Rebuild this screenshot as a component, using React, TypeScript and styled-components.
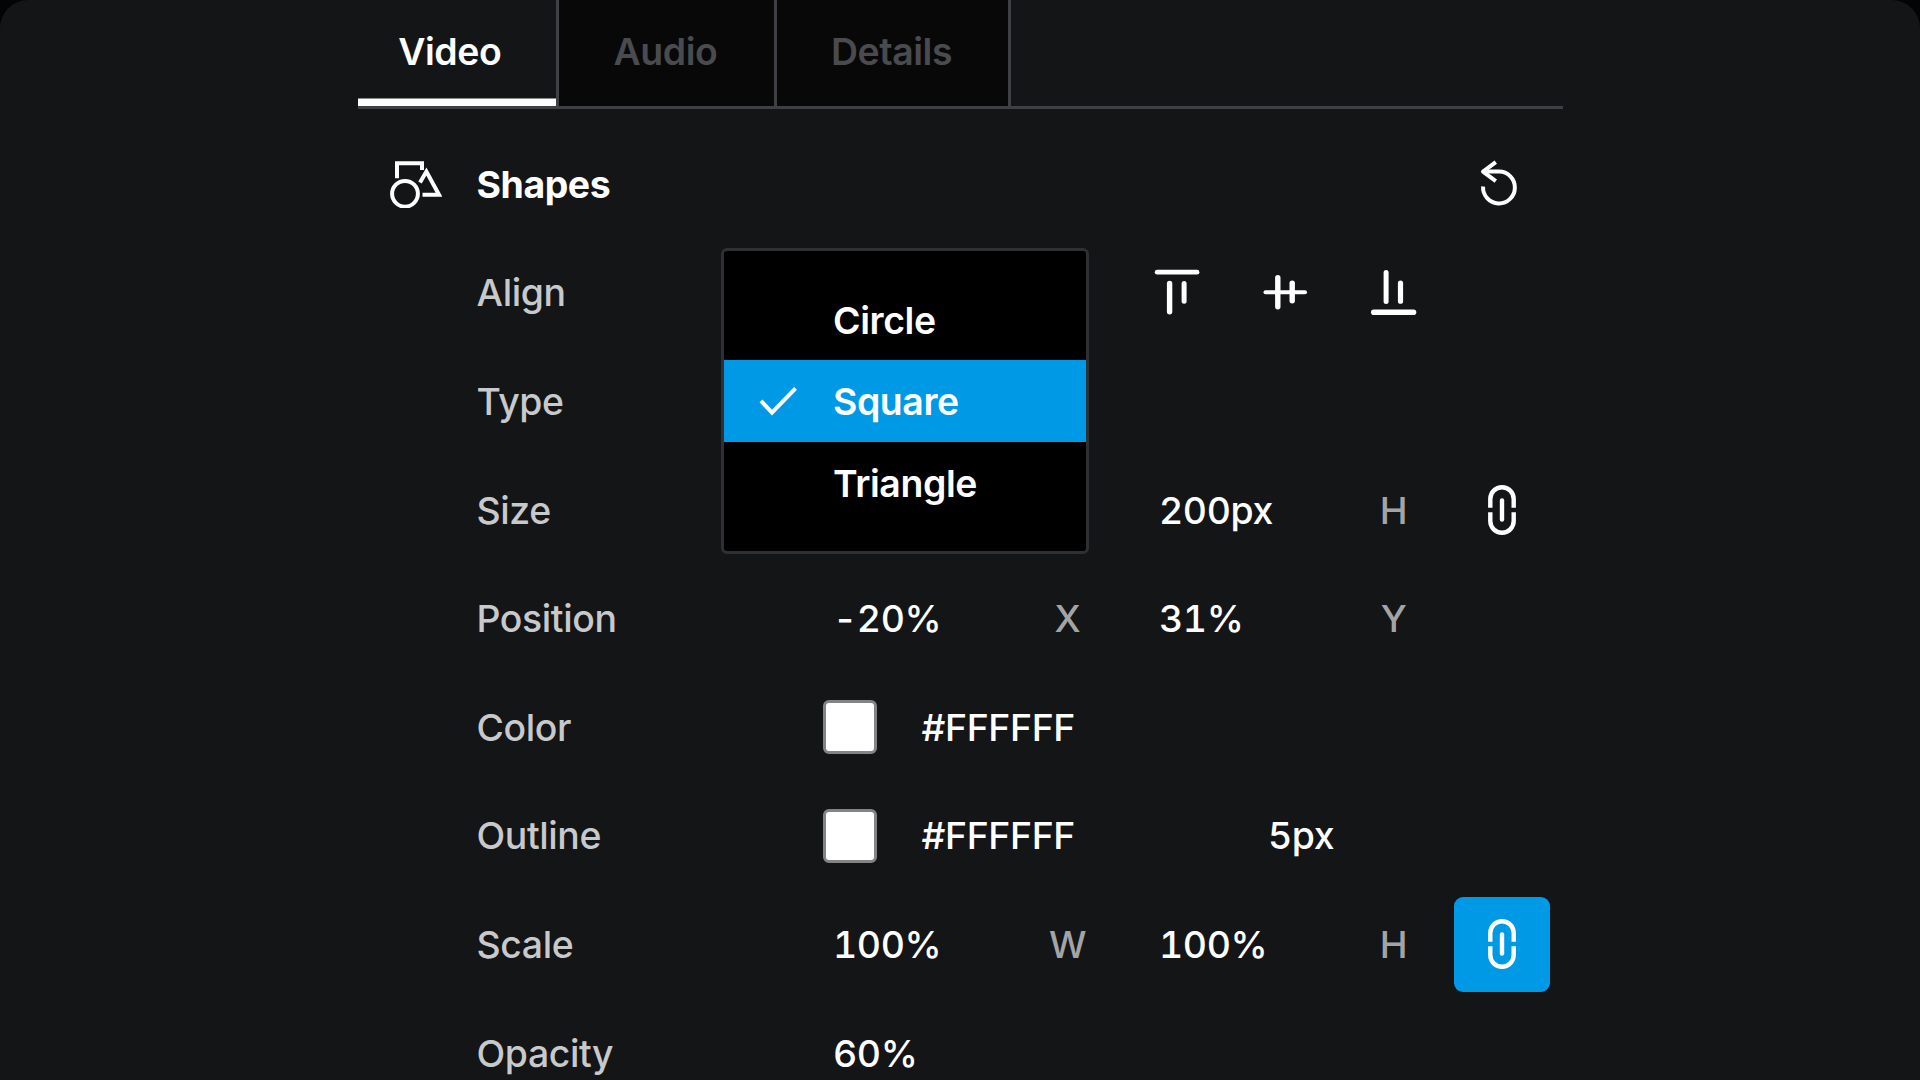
import React from 'react';
import styled, { createGlobalStyle } from 'styled-components';

const color = {
  panel: '#141517',
  tab: '#080808',
  line: '#3f4043',
  accent: '#0099e6',
  label: '#c8c9cb',
  unit: '#a4a4a7',
  muted: '#4a4b4e',
};

const GlobalStyle = createGlobalStyle`
  * { box-sizing: border-box; }
  body {
    margin: 0;
    background: #040404;
    overflow: hidden;
  }
`;

const Screen = styled.div`
  height: 1080px;
  display: flex;
  justify-content: center;
  overflow: hidden;
  border-radius: 28px 28px 0 0;
  background: ${color.panel};
  color: #fff;
  font-family: Inter, 'Liberation Sans', sans-serif;
  font-size: 37.4px;
  font-weight: 500;
  letter-spacing: -0.38px;
  line-height: 46px;
`;

const Inspector = styled.main`
  width: 1205px;
  flex: none;
`;

const Tabs = styled.nav`
  display: flex;
  height: 109px;
  border-bottom: 3px solid ${color.line};
  margin-bottom: 21px;
`;

const Tab = styled.button<{ $width: number; $active?: boolean }>`
  width: ${(p) => p.$width}px;
  height: 106px;
  padding: 0 ${(p) => (p.$active ? 14 : 2)}px 2px 0;
  border: 0;
  border-right: 3px solid ${color.line};
  background: ${(p) => (p.$active ? color.panel : color.tab)};
  box-shadow: ${(p) => (p.$active ? 'inset 0 -7.5px 0 #fff' : 'none')};
  color: ${(p) => (p.$active ? '#fff' : color.muted)};
  font: inherit;
  font-weight: 600;
  letter-spacing: -0.43px;
`;

const Row = styled.section`
  position: relative;
  display: grid;
  grid-template-columns: 120px 345px 218px 54px 65px 207px 54px 34px 96px;
  align-items: center;
  height: 108.6px;
`;

const Glyph = styled.div`
  display: flex;
  padding: 0 0 4px 28.5px;
`;

const Label = styled.label`
  grid-column: 2;
  margin-left: -1px;
  padding-top: 1px;
  color: ${color.label};
`;

const Title = styled.h2`
  margin: 0 0 0 -1px;
  padding-top: 1px;
  font-size: 37.4px;
  font-weight: 700;
  letter-spacing: -0.43px;
  line-height: 46px;
`;

const Value = styled.span<{ $col: 'a' | 'b' }>`
  grid-column: ${(p) => (p.$col === 'a' ? 3 : 6)};
  grid-row: 1;
  padding-top: 1px;
  padding-left: ${(p) => (p.$col === 'a' ? 10.5 : 0)}px;
  margin-left: ${(p) => (p.$col === 'a' ? 0 : -0.5)}px;
  font-feature-settings: 'tnum';
  white-space: nowrap;
`;

const Unit = styled.span<{ $col: 'a' | 'b' }>`
  grid-column: ${(p) => (p.$col === 'a' ? 4 : 7)};
  grid-row: 1;
  padding-top: 1px;
  color: ${color.unit};
  text-align: center;
`;

const ColorField = styled.div`
  grid-column: 3 / 6;
  grid-row: 1;
  display: flex;
  align-items: center;
  gap: 44.5px;
  padding-left: 0.5px;

  span { padding-top: 1px; }
`;

const Swatch = styled.i`
  width: 54px;
  height: 54px;
  border: 3px solid #848487;
  border-radius: 6px;
  background: #fff;
`;

const StrokeWidth = styled.span`
  grid-column: 6 / 8;
  padding: 1px 0 0 108.5px;
  font-feature-settings: 'tnum';
`;

const AlignGroup = styled.div`
  grid-column: 6 / 9;
  display: flex;
  gap: 60px;
  margin: 0 0 1px -7px;
`;

const Action = styled.button<{ $active?: boolean; $nudge?: boolean }>`
  grid-column: 9;
  grid-row: 1;
  display: flex;
  align-items: center;
  justify-content: center;
  width: 95.5px;
  height: 95px;
  margin-left: -0.5px;
  padding: ${(p) => (p.$nudge ? '0 6px 3px 0' : '0')};
  border: 0;
  border-radius: 9px;
  color: #fff;
  background: ${(p) => (p.$active ? color.accent : 'transparent')};
`;

const Menu = styled.ul`
  position: absolute;
  z-index: 1;
  top: -99px;
  left: 363.5px;
  width: 368px;
  height: 306px;
  margin: 0;
  padding: 27.6px 0;
  border: 3px solid #2f3033;
  border-radius: 6px;
  background: #000;
  list-style: none;
`;

const Option = styled.li<{ $selected?: boolean }>`
  display: grid;
  grid-template-columns: 35px 74px 1fr;
  align-items: center;
  height: 81.6px;
  background: ${(p) => (p.$selected ? color.accent : 'transparent')};
  font-weight: 600;
  letter-spacing: -0.4px;

  span {
    grid-column: 3;
    padding-top: 2px;
  }
`;

const Icon = styled.svg`
  display: block;
  flex: none;
  fill: none;
  stroke: currentColor;
  stroke-width: 4;
`;

const LinkShape = styled(Icon)`
  stroke-width: 4.4;
`;

const ShapesIcon = () => (
  <Icon width="56" height="52" viewBox="0 0 56 52">
    <path d="M11 22.3V7.2H36V14" />
    <circle cx="19" cy="37.8" r="12.9" />
    <path d="M34 26.5L40.4 15.6L53 38.7H36.5" />
  </Icon>
);

const ResetIcon = () => (
  <Icon width="44" height="52" viewBox="0 0 44 52" strokeLinejoin="round">
    <path d="M18.8 5.1L6 14.6L18.8 24.2" />
    <path d="M6 14.6H22A15.9 15.9 0 1 1 6.1 29.5" />
  </Icon>
);

const LinkIcon = () => (
  <LinkShape width="32" height="54" viewBox="0 0 32 54">
    <path d="M4.3 24.8V15.9A11.7 11.7 0 0 1 27.7 15.9V24.8" />
    <path d="M4.3 29.2V38.1A11.7 11.7 0 0 0 27.7 38.1V29.2" />
    <path d="M16 17.4V36.6" strokeLinecap="round" />
  </LinkShape>
);

const AlignTopIcon = () => (
  <Icon width="48" height="48" viewBox="0 0 48 48" strokeLinecap="round">
    <path d="M4.2 4.2H44" style={{ strokeWidth: 4.8 }} />
    <path d="M16.6 15.5V43.8" style={{ strokeWidth: 5.4 }} />
    <path d="M31.1 15.5V33.2" style={{ strokeWidth: 5 }} />
  </Icon>
);

const AlignMiddleIcon = () => (
  <Icon width="48" height="48" viewBox="0 0 48 48" strokeLinecap="round">
    <path d="M4.5 24.2H44" />
    <path d="M16.8 9.7V38.7" style={{ strokeWidth: 5.4 }} />
    <path d="M31.2 15.2V32.8" style={{ strokeWidth: 5.4 }} />
  </Icon>
);

const AlignBottomIcon = () => (
  <Icon width="48" height="48" viewBox="0 0 48 48" strokeLinecap="round">
    <path d="M17.1 4.4V33.5" style={{ strokeWidth: 5 }} />
    <path d="M31.5 15.2V33.2" style={{ strokeWidth: 5.2 }} />
    <path d="M4.8 44.2H44.5" style={{ strokeWidth: 5.6 }} />
  </Icon>
);

const CheckIcon = () => (
  <Icon width="40" height="34" viewBox="0 0 40 34">
    <path d="M2 16.9L13 28.7L36.5 4.4" />
  </Icon>
);

const CheckSlot = styled.div`
  grid-column: 2;
  display: flex;
`;

export default function App() {
  return (
    <>
      <GlobalStyle />
      <Screen>
        <Inspector>
          <Tabs>
            <Tab $width={201.5} $active>Video</Tab>
            <Tab $width={218}>Audio</Tab>
            <Tab $width={234}>Details</Tab>
          </Tabs>
          <Row>
            <Glyph><ShapesIcon /></Glyph>
            <Title>Shapes</Title>
            <Action $nudge><ResetIcon /></Action>
          </Row>
          <Row>
            <Label>Align</Label>
            <AlignGroup>
              <AlignTopIcon />
              <AlignMiddleIcon />
              <AlignBottomIcon />
            </AlignGroup>
          </Row>
          <Row>
            <Label>Type</Label>
            <Menu>
              <Option><span>Circle</span></Option>
              <Option $selected>
                <CheckSlot><CheckIcon /></CheckSlot>
                <span>Square</span>
              </Option>
              <Option><span>Triangle</span></Option>
            </Menu>
          </Row>
          <Row>
            <Label>Size</Label>
            <Value $col="b">200px</Value>
            <Unit $col="b">H</Unit>
            <Action><LinkIcon /></Action>
          </Row>
          <Row>
            <Label>Position</Label>
            <Value $col="a">-20%</Value>
            <Unit $col="a">X</Unit>
            <Value $col="b">31%</Value>
            <Unit $col="b">Y</Unit>
          </Row>
          <Row>
            <Label>Color</Label>
            <ColorField><Swatch /><span>#FFFFFF</span></ColorField>
          </Row>
          <Row>
            <Label>Outline</Label>
            <ColorField><Swatch /><span>#FFFFFF</span></ColorField>
            <StrokeWidth>5px</StrokeWidth>
          </Row>
          <Row>
            <Label>Scale</Label>
            <Value $col="a">100%</Value>
            <Unit $col="a">W</Unit>
            <Value $col="b">100%</Value>
            <Unit $col="b">H</Unit>
            <Action $active><LinkIcon /></Action>
          </Row>
          <Row>
            <Label>Opacity</Label>
            <Value $col="a">60%</Value>
          </Row>
        </Inspector>
      </Screen>
    </>
  );
}
